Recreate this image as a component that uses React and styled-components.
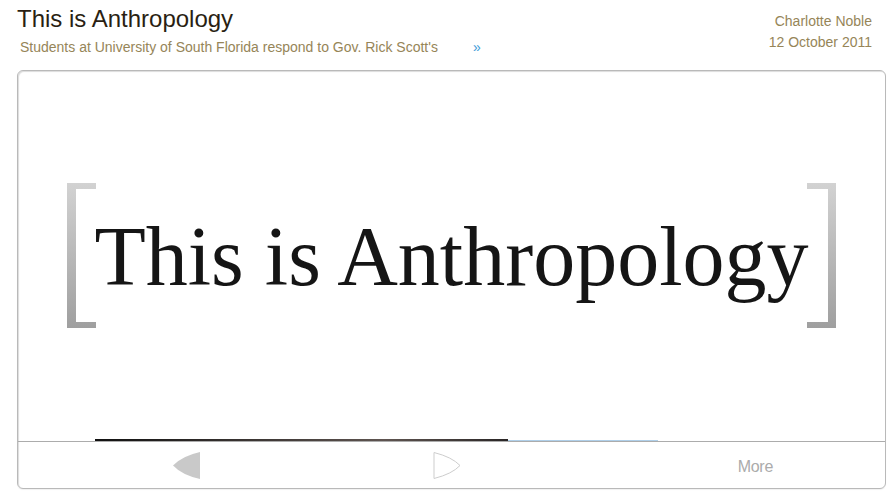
import styled, { createGlobalStyle } from "styled-components";

const GlobalStyle = createGlobalStyle`
  html, body {
    margin: 0;
    padding: 0;
    background: #ffffff;
  }
  body {
    font-family: "Liberation Sans", Arial, sans-serif;
  }
`;

const Page = styled.div`
  width: 894px;
  height: 499px;
  overflow: hidden;
`;

const Header = styled.header`
  display: flex;
  justify-content: space-between;
  padding: 5px 22px 0 17px;
`;

const TitleBlock = styled.div`
  display: flex;
  flex-direction: column;
`;

const Title = styled.h1`
  margin: 0;
  font-size: 24px;
  line-height: 28px;
  font-weight: normal;
  color: #2a1f13;
`;

const Subtitle = styled.div`
  display: flex;
  margin-top: 5px;
  padding-left: 3px;
  font-size: 14px;
  line-height: 18px;
  color: #968558;
`;

const MoreLink = styled.span`
  margin-left: 35px;
  color: #3d9bd8;
`;

const Meta = styled.div`
  display: flex;
  flex-direction: column;
  align-items: flex-end;
  margin-top: 6px;
  font-size: 14px;
  line-height: 21px;
  color: #968558;
`;

const Card = styled.section`
  display: flex;
  flex-direction: column;
  height: 419px;
  box-sizing: border-box;
  margin: 14px 8px 0 17px;
  border: 1px solid #b9b9b9;
  border-radius: 6px;
  background: #ffffff;
  box-shadow: inset 1px 1px 1px rgba(0, 0, 0, 0.14), 0 1px 1px rgba(0, 0, 0, 0.06);
  overflow: hidden;
`;

const Slide = styled.div`
  display: flex;
  align-items: center;
  justify-content: center;
  height: 368px;
`;

const SlideText = styled.div`
  margin: 4px -2px 0 -2px;
  font-family: "Liberation Serif", "Times New Roman", serif;
  font-size: 84px;
  line-height: 1;
  color: #151515;
  white-space: nowrap;
`;

const Progress = styled.div`
  display: flex;
  align-items: flex-end;
  height: 2px;
  padding-left: 77px;
`;

const Segment = styled.div`
  width: ${(p) => p.$w}px;
  height: ${(p) => p.$h || 2}px;
  background: ${(p) => p.$bg};
`;

const Toolbar = styled.div`
  display: grid;
  grid-template-columns: 338px 182px 1fr;
  align-items: center;
  height: 46px;
  border-top: 1px solid #acacac;
`;

const NavButton = styled.div`
  display: flex;
  justify-content: center;
  align-items: center;
`;

const MoreButton = styled.div`
  justify-self: end;
  margin: 4px 112px 0 0;
  font-size: 16px;
  letter-spacing: -0.3px;
  color: #ababab;
`;

const Bracket = ({ side }) => {
  const id = `grad-${side}`;
  const d =
    side === "left"
      ? "M0 0 H29 V6 H9 V139 H29 V145 H0 Z"
      : "M0 0 H29 V145 H0 V139 H21 V6 H0 Z";
  return (
    <svg width="29" height="145" viewBox="0 0 29 145">
      <defs>
        <linearGradient id={id} x1="0" y1="0" x2="0" y2="1">
          <stop offset="0" stopColor="#d2d2d2" />
          <stop offset="1" stopColor="#9f9f9f" />
        </linearGradient>
      </defs>
      <path d={d} fill={`url(#${id})`} />
    </svg>
  );
};

const PrevIcon = () => (
  <svg width="28" height="27" viewBox="0 0 28 27">
    <path d="M27 0 V27 Q9 23 0 13.5 Q9 4 27 0 Z" fill="#c9c9c9" />
  </svg>
);

const NextIcon = () => (
  <svg width="28" height="27" viewBox="0 0 28 27">
    <path
      d="M1 0.5 V26.5 Q19 22 27 13.5 Q19 5 1 0.5 Z"
      fill="none"
      stroke="#cdcdcd"
      strokeWidth="1"
    />
  </svg>
);

export default function App() {
  return (
    <Page>
      <GlobalStyle />
      <Header>
        <TitleBlock>
          <Title>This is Anthropology</Title>
          <Subtitle>
            Students at University of South Florida respond to Gov. Rick Scott's
            <MoreLink>»</MoreLink>
          </Subtitle>
        </TitleBlock>
        <Meta>
          <span>Charlotte Noble</span>
          <span>12 October 2011</span>
        </Meta>
      </Header>
      <Card>
        <Slide>
          <Bracket side="left" />
          <SlideText>This is Anthropology</SlideText>
          <Bracket side="right" />
        </Slide>
        <Progress>
          <Segment $w={413} $bg="linear-gradient(90deg, #111 0%, #5e5450 70%, #2a2626 100%)" />
          <Segment $w={150} $h={1} $bg="#afcfe9" />
        </Progress>
        <Toolbar>
          <NavButton>
            <PrevIcon />
          </NavButton>
          <NavButton>
            <NextIcon />
          </NavButton>
          <MoreButton>More</MoreButton>
        </Toolbar>
      </Card>
    </Page>
  );
}
